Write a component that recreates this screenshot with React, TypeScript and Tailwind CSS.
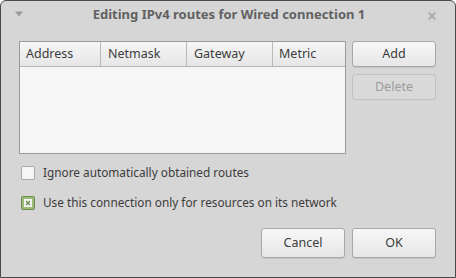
import { X } from "lucide-react";

const font = { fontFamily: '"Noto Sans", "Open Sans", sans-serif' };

function Btn({ label, disabled, tall }: { label: string; disabled?: boolean; tall?: boolean }) {
  return (
    <button
      className={`w-[84px] ${tall ? "h-[30px]" : "h-[26px]"} rounded-[3px] border text-[12.5px] ${
        disabled
          ? "border-[#c2c2c2] bg-[#d9d9d9] text-[#9c9c9c]"
          : "border-[#a8a8a8] bg-gradient-to-b from-[#f7f7f7] to-[#e6e6e6] text-[#3c3c3c] shadow-[0_1px_0_rgba(0,0,0,0.08)]"
      }`}
    >
      {label}
    </button>
  );
}

export default function App() {
  return (
    <div style={font} className="w-[456px] h-[278px] bg-[#d6d6d6] border border-[#4a4a4a] rounded-t-[6px] flex flex-col overflow-hidden">

      {/* Title bar */}
      <div className="h-[28px] flex items-center px-[13px] relative">
        <svg width="10" height="6" viewBox="0 0 10 6" className="mt-[-2px]">
          <path d="M1 0.5 L9 0.5 L5 5.5 Z" fill="#9a9a9a" />
        </svg>
        <div className="flex-1 text-center text-[13px] font-bold text-[#626262] pl-[8px]">
          Editing IPv4 routes for Wired connection 1
        </div>
        <X size={12} strokeWidth={3.5} className="text-[#a4a4a4] mr-[4px] mt-[1px]" />
      </div>

      {/* Body */}
      <div className="flex gap-[6px] pl-[18px] pr-[18px] pt-[12px]">
        <div className="w-[327px] h-[113px] border border-[#9b9b9b] bg-[#f6f6f6] flex flex-col">
          <div className="h-[25px] flex border-b border-[#b5b5b5] bg-gradient-to-b from-[#f6f6f6] to-[#e6e6e6] text-[12.5px] text-[#3c3c3c]">
            <div className="w-[81px] border-r border-[#b9b9b9] pl-[6px] flex items-center">Address</div>
            <div className="w-[86px] border-r border-[#b9b9b9] pl-[7px] flex items-center">Netmask</div>
            <div className="w-[86px] border-r border-[#b9b9b9] pl-[7px] flex items-center">Gateway</div>
            <div className="flex-1 pl-[6px] flex items-center">Metric</div>
          </div>
        </div>
        <div className="flex flex-col gap-[7px]">
          <Btn label="Add" />
          <Btn label="Delete" disabled />
        </div>
      </div>

      {/* Options */}
      <div className="flex flex-col gap-[16px] pl-[20px] pt-[12px] text-[11.8px] text-[#3c3c3c]">
        <label className="flex items-center gap-[8px] h-[14px]">
          <span className="w-[14px] h-[14px] rounded-[2px] border border-[#a9a9a9] bg-[#f6f6f6]" />
          Ignore automatically obtained routes
        </label>
        <label className="flex items-center gap-[8px] h-[14px]">
          <span className="w-[14px] h-[14px] rounded-[2px] border border-[#6f8c4e] bg-[#9cbd78] flex items-center justify-center">
            <span className="w-[8px] h-[8px] bg-[#f4f4f4] flex items-center justify-center">
              <svg width="6" height="6" viewBox="0 0 6 6">
                <path d="M1 1 L5 5 M5 1 L1 5" stroke="#6f8c4e" strokeWidth="1.4" />
              </svg>
            </span>
          </span>
          Use this connection only for resources on its network
        </label>
      </div>

      {/* Footer */}
      <div className="flex justify-end gap-[7px] pr-[19px] mt-auto mb-[19px]">
        <Btn label="Cancel" tall />
        <Btn label="OK" tall />
      </div>
    </div>
  );
}
